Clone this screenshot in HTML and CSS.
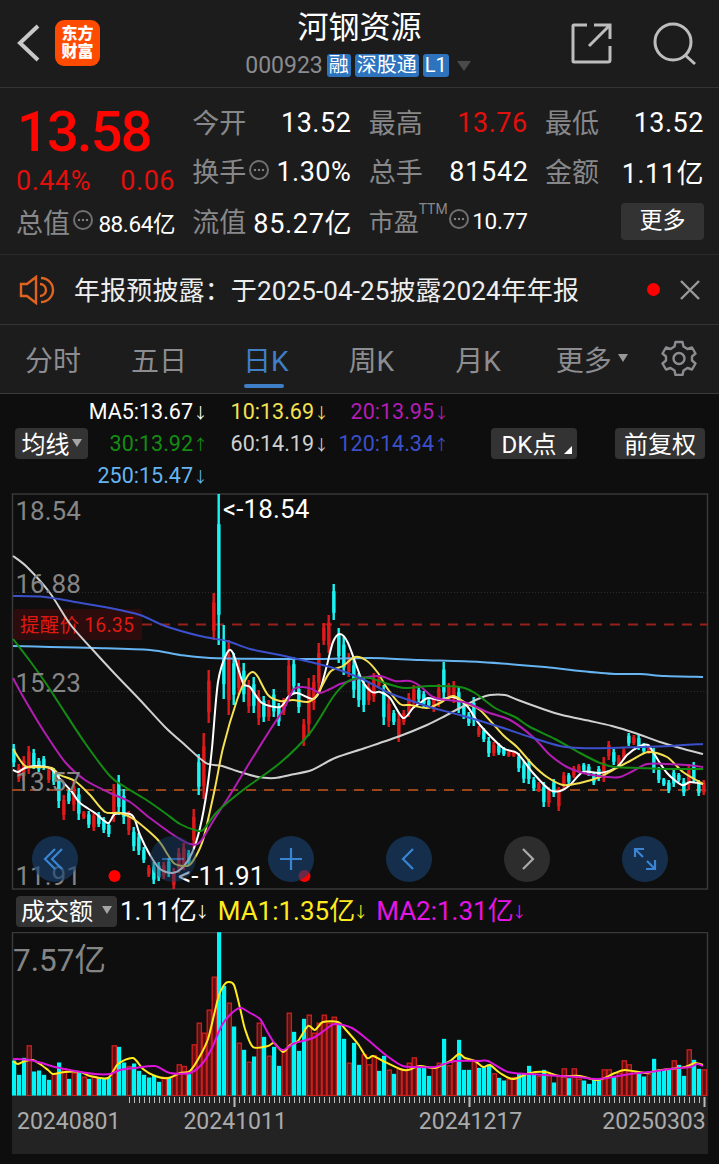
FILE: index.html
```html
<!DOCTYPE html>
<html lang="zh-CN">
<head>
  <meta charset="UTF-8">
  <meta name="viewport" content="width=device-width, initial-scale=1.0">
  <title>河钢资源 000923</title>
  <link rel="stylesheet" href="styles.css">
</head>
<body>

  <header class="topbar">
    <div class="topbar-left">
      <svg class="back" width="24" height="38" viewBox="0 0 24 38"><path d="M21 2 L3 19 L21 36"/></svg>
      <div class="logo"><span>东方</span><span>财富</span></div>
    </div>
    <div class="stock">
      <h1>河钢资源</h1>
      <div class="stock-sub">
        <span class="code">000923</span>
        <span class="tag">融</span>
        <span class="tag">深股通</span>
        <span class="tag">L1</span>
        <i class="tri"></i>
      </div>
    </div>
    <div class="topbar-right">
      <svg width="42" height="42" viewBox="0 0 42 42"><path d="M16 2H3Q2 2 2 3V38Q2 39 3 39H37Q39 39 39 37V23M23 2H39V16M39 2L18 23"/></svg>
      <svg width="46" height="46" viewBox="0 0 46 46"><circle cx="21" cy="21" r="18"/><path d="M33 34L43 43"/></svg>
    </div>
  </header>

  <section class="quote">
    <div class="quote-main">
      <div class="price">13.58</div>
      <div class="change"><span>0.44%</span><span>0.06</span></div>
      <div class="cell small"><label>总值</label><i class="info"></i><b>88.64亿</b></div>
    </div>
    <div class="quote-col">
      <div class="cell"><label>今开</label><b>13.52</b></div>
      <div class="cell"><label>换手</label><i class="info"></i><b>1.30%</b></div>
      <div class="cell"><label>流值</label><b class="wide">85.27亿</b></div>
    </div>
    <div class="quote-col">
      <div class="cell"><label>最高</label><b class="up">13.76</b></div>
      <div class="cell"><label>总手</label><b class="wide">81542</b></div>
      <div class="cell small pe"><label>市盈</label><sup>TTM</sup><i class="info"></i><b>10.77</b></div>
    </div>
    <div class="quote-col">
      <div class="cell"><label>最低</label><b>13.52</b></div>
      <div class="cell"><label>金额</label><b>1.11亿</b></div>
      <div class="cell last"><button class="more">更多</button></div>
    </div>
  </section>

  <section class="notice">
    <svg class="horn" width="36" height="30" viewBox="0 0 36 30"><path d="M17 2V28L8 21H2V9H8Z"/><path d="M21 9A6 6 0 0 1 21 21M22 3A12 12 0 0 1 22 27"/></svg>
    <p>年报预披露：于2025-04-25披露2024年年报</p>
    <i class="red-dot"></i>
    <svg class="close" width="22" height="22" viewBox="0 0 22 22"><path d="M2 2L20 20M20 2L2 20"/></svg>
  </section>

  <nav class="tabs">
    <a>分时</a>
    <a class="five">五日</a>
    <a class="active">日K</a>
    <a class="week">周K</a>
    <a class="month">月K</a>
    <a class="tab-more">更多<i class="tri"></i></a>
    <svg class="gear" width="36" height="36" viewBox="0 0 36 36"><path d="M14.5 2H21.5L22.5 6.5L26.5 9L31 7.5L34.5 13.5L31 16.5V20.5L34.5 23.5L31 29.5L26.5 28L22.5 30.5L21.5 35H14.5L13.5 30.5L9.5 28L5 29.5L1.5 23.5L5 20.5V16.5L1.5 13.5L5 7.5L9.5 9L13.5 6.5Z"/><circle cx="18" cy="18.5" r="5.5"/></svg>
  </nav>

  <section class="ma-bar">
    <button class="chip ma-chip">均线<i class="tri"></i></button>
    <div class="ma-list">
      <span class="ma5">MA5:13.67<u>↓</u></span><span class="ma10">10:13.69<u>↓</u></span><span class="ma20">20:13.95<u>↓</u></span>
      <span class="ma30">30:13.92<u>↑</u></span><span class="ma60">60:14.19<u>↓</u></span><span class="ma120">120:14.34<u>↑</u></span>
      <span class="ma250">250:15.47<u>↓</u></span>
    </div>
    <button class="chip dk-chip">DK点<i class="corner"></i></button>
    <button class="chip fq-chip">前复权</button>
  </section>

  <section class="kchart">
    <svg id="kline" width="719" height="397" viewBox="0 493 719 397"></svg>
    <div class="controls">
      <button class="ctl"><svg viewBox="0 0 46 46"><path d="M30 13L20 23L30 33M23 13L13 23L23 33"/></svg></button>
      <button class="ctl faded"><svg viewBox="0 0 46 46"><path d="M12 23H34"/></svg></button>
      <button class="ctl"><svg viewBox="0 0 46 46"><path d="M12 23H34M23 12V34"/></svg></button>
      <button class="ctl"><svg viewBox="0 0 46 46"><path d="M27 13L17 23L27 33"/></svg></button>
      <button class="ctl gray"><svg viewBox="0 0 46 46"><path d="M19 13L29 23L19 33"/></svg></button>
      <button class="ctl"><svg viewBox="0 0 46 46"><path d="M13 21V13H22M13 13L21 21M33 24V33H24M33 33L25 25"/></svg></button>
    </div>
  </section>

  <section class="vol-bar">
    <button class="chip vol-chip">成交额<i class="tri"></i></button>
    <span class="v0">1.11亿<u>↓</u></span>
    <span class="v1">MA1:1.35亿<u>↓</u></span>
    <span class="v2">MA2:1.31亿<u>↓</u></span>
  </section>

  <section class="vchart">
    <svg id="volume" width="719" height="164" viewBox="0 932 719 164"></svg>
  </section>

  <footer class="axis">
    <svg id="ticks" width="696" height="11" viewBox="12 1097 696 11"></svg>
    <div class="dates"><span>20240801</span><span>20241011</span><span>20241217</span><span>20250303</span></div>
  </footer>

  <script src="script.js"></script>
</body>
</html>
```
FILE: styles.css
```css
* {
  margin: 0;
  padding: 0;
  box-sizing: border-box;
}

body {
  width: 719px;
  height: 1164px;
  overflow: hidden;
  background: #0d0e0d;
  color: #fff;
  font-family: Roboto, 'Noto Sans CJK SC', sans-serif;
}

button {
  border: none;
  color: #fff;
  font-family: inherit;
}

svg {
  display: block;
  flex: none;
}

i, u, b {
  font-style: normal;
  text-decoration: none;
  font-weight: 400;
}

.tri {
  width: 0;
  height: 0;
  border: 5px solid transparent;
  border-top: 8px solid #98989a;
  border-bottom: 0;
}

/* header */
.topbar {
  display: flex;
  justify-content: space-between;
  height: 88px;
  background: #1c1c1c;
  border-bottom: 1px solid #343430;
}

.topbar-left {
  display: flex;
  align-items: center;
  width: 180px;
  padding: 0 0 2px 17px;
}

.back {
  fill: none;
  stroke: #c8c8c8;
  stroke-width: 4;
}

.logo {
  display: flex;
  flex-direction: column;
  justify-content: center;
  width: 45px;
  height: 46px;
  margin-left: 14px;
  border-radius: 9px;
  background: #ff4b00;
  text-align: center;
  font-size: 16px;
  line-height: 18px;
  font-weight: 900;
}

.stock {
  display: flex;
  flex-direction: column;
  align-items: center;
  width: 360px;
}

.stock h1 {
  height: 52px;
  font-size: 31px;
  line-height: 56px;
  font-weight: 400;
}

.stock-sub {
  display: flex;
  align-items: center;
  gap: 4px;
  height: 27px;
  padding-right: 3px;
}

.code {
  color: #8b8b8f;
  font-size: 23px;
}

.tag {
  height: 23px;
  padding: 0 2px;
  border-radius: 3px;
  background: #2e73bd;
  font-size: 20px;
  line-height: 22px;
}

.stock-sub .tri {
  margin-left: 4px;
  border-width: 10px 7px 0;
  border-top-color: #4a4a4a;
}

.topbar-right {
  display: flex;
  align-items: center;
  justify-content: flex-end;
  gap: 39px;
  width: 180px;
  padding: 0 21px 0 0;
  fill: none;
  stroke: #bdbdbd;
  stroke-width: 3;
}

/* quote */
.quote {
  display: flex;
  justify-content: space-between;
  height: 167px;
  padding: 10px 15px 8px 16px;
  background: #1c1c1c;
  border-bottom: 1px solid #2a2a2a;
}

.quote-main, .quote-col {
  display: flex;
  flex-direction: column;
  width: 159px;
}

.price {
  height: 62px;
  padding-left: 1px;
  color: #ff0500;
  font-size: 56px;
  line-height: 68px;
  font-weight: 500;
  letter-spacing: -1.8px;
}

.change {
  display: flex;
  justify-content: space-between;
  height: 38px;
  color: #e0100c;
  font-size: 27px;
  line-height: 42px;
  letter-spacing: 0.5px;
}

.cell {
  display: flex;
  align-items: center;
  height: 49.5px;
}

.cell label {
  margin-top: -2px;
  color: #88888a;
  font-size: 27px;
  white-space: nowrap;
}

.cell b {
  margin-left: auto;
  font-size: 27px;
  letter-spacing: 0.5px;
  white-space: nowrap;
}

.cell.small b {
  font-size: 22.5px;
  letter-spacing: -0.4px;
}

.cell b.wide {
  margin-right: -1px;
  letter-spacing: 0.7px;
}

.cell b.up {
  color: #e0100c;
}

.cell sup {
  align-self: flex-start;
  color: #88888a;
  font-size: 14px;
  line-height: 14px;
  padding-top: 5px;
}

.pe label {
  width: 50px;
  font-size: 25px;
}

.info {
  flex: none;
  width: 20px;
  height: 20px;
  margin: -4px 0 0 3px;
  border: 2px solid #707072;
  border-radius: 50%;
  background: radial-gradient(circle at 4px 8px, #808080 1.3px, transparent 1.6px), radial-gradient(circle at 8px 8px, #808080 1.3px, transparent 1.6px), radial-gradient(circle at 12px 8px, #808080 1.3px, transparent 1.6px);
}

.pe .info {
  margin-left: 1px;
}

.cell.pe b {
  letter-spacing: -0.2px;
}

.last {
  justify-content: flex-end;
}

.more {
  width: 83px;
  height: 37px;
  border-radius: 4px;
  background: #333;
  font-size: 23px;
  line-height: 34px;
}

/* notice */
.notice {
  display: flex;
  align-items: center;
  height: 70px;
  padding: 0 18px 0 19px;
  background: #1c1c1c;
  border-bottom: 1px solid #343434;
}

.horn {
  fill: none;
  stroke: #e0631f;
  stroke-width: 2.4;
}

.notice p {
  flex: 1;
  margin: -3px 0 0 19px;
  font-size: 26px;
  letter-spacing: 0.13px;
  color: #eee;
  white-space: nowrap;
}

.red-dot {
  width: 13px;
  height: 13px;
  margin-right: 19px;
  border-radius: 50%;
  background: #f00;
}

.close {
  fill: none;
  stroke: #999;
  stroke-width: 2.4;
}

/* tabs */
.tabs {
  display: flex;
  align-items: center;
  height: 69px;
  padding-left: 25px;
  background: #1c1c1c;
  border-bottom: 1px solid #3a3a3a;
  color: #8d8d91;
  font-size: 28px;
}

.tabs a {
  display: flex;
  align-items: center;
  height: 68px;
  margin-right: 50px;
  white-space: nowrap;
}

.tabs .five {
  margin-right: 56px;
}

.tabs .active {
  position: relative;
  color: #3f7fc8;
  margin-right: 60px;
}

.tabs .active::after {
  content: '';
  position: absolute;
  left: 1px;
  bottom: 5px;
  width: 40px;
  height: 4px;
  border-radius: 2px;
  background: #3f7fc8;
}

.tabs .week {
  margin-right: 61px;
}

.tabs .month {
  margin-right: 55px;
}

.tabs .tab-more {
  margin-right: 33px;
}

.tab-more .tri {
  margin: -3px 0 0 6px;
}

.gear {
  margin-top: -3px;
  fill: none;
  stroke: #8d8d91;
  stroke-width: 2.4;
  stroke-linejoin: round;
}

/* moving averages */
.ma-bar {
  display: flex;
  align-items: center;
  height: 99px;
  padding-left: 15px;
}

.chip {
  display: flex;
  align-items: center;
  justify-content: center;
  height: 31px;
  padding-bottom: 2px;
  border-radius: 4px;
  background: #333;
  font-size: 24px;
}

.chip .tri {
  border-top-color: #a5a5a5;
}

.ma-chip {
  width: 73px;
}

.ma-chip .tri {
  margin-left: 2px;
}

.ma-list {
  display: grid;
  grid-template-columns: 120px 121px 120px;
  grid-auto-rows: 32px;
  height: 96px;
  width: 403px;
  text-align: right;
  font-size: 21.5px;
  line-height: 32px;
}

.ma-list span {
  display: flex;
  align-items: center;
  justify-content: flex-end;
  white-space: nowrap;
}

.ma-list u, .vol-bar u {
  width: 15px;
  font-family: 'Noto Sans CJK SC', sans-serif;
  font-size: 15px;
  line-height: 20px;
}

.ma5 { color: #fff; }
.ma10 { color: #f5e152; }
.ma20 { color: #b41db4; }
.ma30 { color: #148c14; }
.ma60 { color: #d0d0d0; }
.ma120 { color: #3c50cc; }
.ma250 { color: #66b5f2; }

.dk-chip {
  width: 86px;
  padding-right: 2px;
}

.corner {
  align-self: flex-end;
  margin: 0 -8px 3px 8px;
  border-left: 8px solid transparent;
  border-bottom: 8px solid #fff;
}

.fq-chip {
  width: 90px;
  margin-left: 38px;
}

/* charts */
.kchart {
  position: relative;
  height: 397px;
}

.controls {
  position: absolute;
  left: 32px;
  top: 343px;
  display: flex;
  gap: 72px;
}

.ctl {
  width: 46px;
  height: 46px;
  border-radius: 50%;
  background: rgba(25, 65, 110, 0.65);
}

.ctl svg {
  width: 46px;
  height: 46px;
  fill: none;
  stroke: #3a84d2;
  stroke-width: 2.2;
}

.ctl.faded {
  opacity: 0.7;
}

.ctl.gray {
  background: #2d2d2d;
}

.ctl.gray svg {
  stroke: #aaa;
}

#kline, #volume {
  font-family: Roboto, 'Noto Sans CJK SC', sans-serif;
}

#kline {
  overflow: visible;
}

.frame { fill: none; stroke: #393939; stroke-width: 1.5; }
.grid { stroke: #2b2b2b; stroke-dasharray: 1 2; }
.label { fill: #858587; font-size: 26px; }
.mark { fill: #fff; font-size: 26px; letter-spacing: 0.1px; }
.line { fill: none; stroke-width: 2; }

.vol-bar {
  display: flex;
  align-items: center;
  height: 42px;
  padding-left: 16px;
  font-size: 26px;
  line-height: 30px;
  white-space: nowrap;
}

.vol-bar span {
  display: flex;
  align-items: center;
  height: 30px;
}

.vol-chip {
  width: 101px;
  padding-bottom: 3px;
}

.vol-chip .tri {
  margin-left: 9px;
}

.vol-bar u {
  margin-left: -2px;
}

.v0 { margin-left: 3px; }
.v1 { margin-left: 8px; color: #ffeb1e; }
.v2 { margin-left: 8px; color: #e614e6; }

.axis {
  width: 696px;
  height: 58px;
  margin-left: 12px;
  background: #232324;
}

.dates {
  display: flex;
  padding-left: 5px;
  color: #ababab;
  font-size: 23px;
  line-height: 30px;
}

.dates span:nth-child(2) { margin-left: 63px; }
.dates span:nth-child(3) { margin-left: 132px; }
.dates span:nth-child(4) { margin-left: 80px; }
```
FILE: script.js
```js
const NS = 'http://www.w3.org/2000/svg';
const UP = '#e0191b';
const DOWN = '#1cf4f4';

function add(parent, tag, attrs, text) {
  const el = document.createElementNS(NS, tag);
  for (const k in attrs) el.setAttribute(k, attrs[k]);
  if (text) el.textContent = text;
  parent.appendChild(el);
  return el;
}

// d/u = falling/rising day, then high and low
const days = `d744,767 u764,782 u756,781 u746,774 d749,769 d758,772 d756,770 u767,783 d768,785 d773,808
u795,820 d790,804 u780,811 d788,820 u811,819 d811,828 u812,831 d812,827 d817,833 d822,837
u784,822 d775,815 d789,824 u811,835 d827,851 d833,855 d847,863 u865,877 d862,884 d862,881
u862,879 d858,877 u868,889 u848,873 u843,870 d850,865 u809,848 d754,795 u733,799 u670,723
u593,640 d494,645 d625,699 u640,715 d653,705 u660,695 d663,702 u680,713 d677,713 u690,725
d696,722 u700,721 d689,717 d703,726 u698,715 u657,700 d657,693 d683,713 u719,746 u678,736
u675,710 u643,693 u623,645 u615,653 d584,620 d628,663 d637,675 u653,677 d657,698 d673,707
d677,712 u683,705 u673,702 u677,688 d685,725 u698,727 d710,725 u713,742 u710,725 u693,717
u685,707 d687,702 d691,707 d699,707 u696,712 u684,707 d662,700 u683,700 u681,703 d687,713
d703,719 d712,726 d697,726 u726,737 d728,742 d737,757 u742,756 d743,755 d747,756 u750,757
u751,757 d753,772 d761,783 d759,784 d777,791 u782,792 d782,807 u787,807 d779,797 u787,811
u772,789 d773,784 u766,778 u764,773 d763,772 d764,776 d772,785 d766,781 u757,782 u741,760
d749,765 u755,768 u748,760 d733,746 u735,745 d735,750 d743,753 u744,754 d748,773 d767,783
d778,786 d780,793 d769,787 d773,782 d778,796 u764,790 d762,783 d780,796 u780,795`.split(/\s+/);

// bar heights in thirds of a pixel
const vols = `105d 62d 113d 149u 72d 75d 62d 47d 65u 99d 80u 50d 67u 72d 55u 50d 57u 54d 52d 54d
149u 146d 99d 87u 96d 74d 62d 54d 62d 41d 54u 54d 57u 92u 87u 64d 152u 217u 187u 256u
355u 490d 329d 277u 207d 157u 137d 100u 117d 217u 176d 118u 146d 89d 137u 247u 191d 134d 230d 241u
187u 217u 241u 217u 235u 215d 170d 97u 158d 92d 122u 92u 119u 74d 119d 76u 65d 80u 77u 97u
113u 90d 86d 59d 85u 97u 170d 89u 104u 167d 77d 77d 102u 83d 87d 92d 65u 53d 45d 49u
54u 65d 65d 89d 65d 57u 77d 61u 39d 57u 80u 52d 80u 49u 45d 35d 47d 47d 77u 77u
57d 67u 104u 92u 72u 67d 57d 64u 110d 77d 77d 77d 104u 92d 59d 137u 107d 80d 77u`.split(/\s+/);

const averages = [
  ['#66b5f2', '13,646 50,647 95,648 150,650 180,655 210,658 270,659 320,659 370,658 420,660 480,662 545,667 580,671 615,674 640,674 665,676 703,677'],
  ['#d0d0d0', '13,556 27,567 50,593 70,624 92,649 115,674 140,700 165,727 185,745 206,763 222,766 240,772 258,777 275,778 290,775 312,770 335,758 365,748 400,736 427,725 445,716 460,708 478,699 490,695 505,695 518,700 540,708 562,715 590,721 612,726 635,733 660,742 680,748 703,754'],
  ['#fff', '13,770 18,772 25,768 35,766 50,768 60,779 72,792 80,803 95,813 108,823 115,814 130,814 135,820 140,835 150,855 160,869 172,873 182,868 192,853 200,828 207,790 212,748 218,682 227,653 233,653 243,683 250,687 262,703 280,707 288,697 297,693 313,699 320,690 327,665 333,642 340,634 348,643 362,680 372,692 380,692 390,698 403,718 413,708 420,703 428,698 440,700 453,697 467,706 480,725 503,748 517,753 533,773 550,790 560,791 570,785 583,772 600,773 617,767 627,755 640,746 648,745 653,752 667,773 682,785 690,782 703,784'],
  ['#f5e152', '13,749 25,766 40,767 52,768 60,775 75,781 90,795 105,812 120,813 135,820 158,840 168,855 175,864 187,866 193,861 203,840 215,788 223,748 237,700 247,677 253,672 258,677 268,695 280,701 293,700 308,702 317,695 330,672 343,666 355,657 367,661 378,673 387,688 400,704 410,705 427,708 440,703 453,696 467,704 480,710 503,735 517,747 533,765 547,777 563,785 580,783 600,777 613,770 630,761 648,752 667,757 683,772 703,784'],
  ['#b41db4', '13,678 25,700 45,733 65,762 85,780 110,793 130,802 150,818 175,836 190,844 200,842 215,818 230,795 250,762 270,730 285,707 293,690 302,687 312,689 320,693 330,689 340,684 350,681 360,678 380,676 395,681 410,681 420,686 433,697 447,700 467,703 487,712 510,720 533,737 550,755 567,767 583,773 607,777 620,777 633,771 647,764 667,764 687,765 703,767'],
  ['#148c14', '13,639 30,661 45,682 60,705 85,743 110,776 125,787 145,799 165,813 180,824 195,830 203,830 217,812 243,790 280,763 310,733 333,697 347,682 358,678 370,678 385,683 405,688 430,686 460,687 475,693 495,708 515,717 530,727 555,739 580,753 600,763 615,767 640,768 665,769 703,769'],
  ['#3c50cc', '13,596 45,597 75,602 110,608 140,615 165,626 200,636 227,641 250,649 280,655 330,667 360,678 387,692 400,697 433,708 460,715 500,727 533,738 560,746 580,748 610,748 640,747 670,746 703,744']
];

const volAverages = [
  ['#ffeb1e', '13,1061 18,1064 25,1061 33,1060 40,1064 48,1070 53,1074 65,1072 80,1072 90,1076 108,1078 118,1064 133,1058 143,1069 155,1076 168,1078 180,1073 190,1071 200,1056 208,1039 214,1015 219,995 224,985 228,982 234,985 240,1008 245,1029 253,1047 268,1046 274,1043 283,1052 290,1045 298,1041 308,1026 315,1030 323,1022 338,1022 346,1030 358,1044 367,1058 373,1056 383,1061 400,1069 408,1070 420,1066 435,1068 450,1061 459,1054 465,1058 475,1061 483,1067 490,1065 500,1073 513,1079 530,1073 545,1072 560,1076 580,1076 598,1080 615,1073 625,1070 645,1073 655,1071 670,1069 685,1067 695,1063 703,1065'],
  ['#dc14dc', '13,1059 30,1060 45,1064 55,1067 75,1071 95,1074 110,1074 120,1070 135,1068 155,1066 170,1073 190,1073 202,1064 212,1048 222,1025 233,1012 241,1008 250,1013 260,1019 268,1033 275,1044 283,1050 295,1043 313,1038 325,1030 335,1024 352,1028 368,1040 387,1056 403,1066 420,1067 435,1067 455,1061 480,1061 488,1061 508,1072 530,1074 560,1076 578,1077 598,1079 630,1074 650,1072 670,1069 690,1067 697,1064 703,1066']
];

// curve through all points
function curve(str) {
  const p = str.split(' ').map(s => s.split(',').map(Number));
  let d = 'M' + p[0];
  for (let i = 0; i < p.length - 1; i++) {
    const a = p[i - 1] || p[i], b = p[i], c = p[i + 1], e = p[i + 2] || c;
    d += `C${b[0] + (c[0] - a[0]) / 7},${b[1] + (c[1] - a[1]) / 7} ${c[0] - (e[0] - b[0]) / 7},${c[1] - (e[1] - b[1]) / 7} ${c}`;
  }
  return d;
}

const k = document.getElementById('kline');
add(k, 'rect', { x: 12.5, y: 494, width: 695, height: 395, class: 'frame' });
[592.5, 691.5, 790.5].forEach(y => add(k, 'line', { x1: 13, x2: 707, y1: y, y2: y, class: 'grid' }));
add(k, 'rect', { x: 13, y: 609, width: 129, height: 31, rx: 2, fill: '#2c0c0c' });
add(k, 'text', { x: 20, y: 632, fill: '#dc1a14', 'font-size': 19.5, 'letter-spacing': 0.2 }, '提醒价 16.35');
add(k, 'path', { d: 'M142 624.5H708', stroke: '#98201c', 'stroke-width': 2, 'stroke-dasharray': '10 8' });
add(k, 'path', { d: 'M12 790H708', stroke: '#9c441a', 'stroke-width': 2, 'stroke-dasharray': '10 8' });

days.forEach((s, i) => {
  const [hi, lo] = s.slice(1).split(',').map(Number);
  const color = s[0] === 'u' ? UP : DOWN;
  const x = 13.5 + i * 5;
  const pad = (lo - hi) * 0.2;
  add(k, 'rect', { x: x - 1, y: hi, width: 2.4, height: lo - hi, fill: color });
  add(k, 'rect', { x: x - 1.3, y: hi + pad, width: 3.4, height: lo - hi - 2 * pad, fill: color });
});
averages.forEach(([color, pts]) => add(k, 'path', { d: curve(pts), stroke: color, class: 'line' }));

[['18.54', 520], ['16.88', 593], ['15.23', 692], ['13.57', 791], ['11.91', 885]].forEach(([t, y]) => add(k, 'text', { x: 15.5, y: y, class: 'label' }, t));
add(k, 'text', { x: 223, y: 518, class: 'mark' }, '<-18.54');
add(k, 'text', { x: 178, y: 885, class: 'mark' }, '<-11.91');
add(k, 'circle', { cx: 114.5, cy: 876, r: 6, fill: '#f00' });
add(k, 'circle', { cx: 304.5, cy: 876, r: 6, fill: '#f00' });

const v = document.getElementById('volume');
add(v, 'rect', { x: 12.5, y: 932.5, width: 695, height: 163, class: 'frame' });
add(v, 'text', { x: 13, y: 971, class: 'label', style: 'font-size:31.5px' }, '7.57亿');
vols.forEach((s, i) => {
  const h = parseInt(s) / 3;
  const x = 14 + i * 5;
  if (s.endsWith('u')) {
    add(v, 'rect', { x: x - 1.8, y: 1095.5 - h, width: 4.2, height: h, fill: '#5a1010', stroke: '#cc2020', 'stroke-width': 1.3 });
  } else {
    add(v, 'rect', { x: x - 2, y: 1095.5 - h, width: 4.2, height: h, fill: '#00f6f6' });
  }
});
volAverages.forEach(([color, pts]) => add(v, 'path', { d: curve(pts), stroke: color, class: 'line' }));

const t = document.getElementById('ticks');
for (let x = 129.5; x < 706; x += 5) {
  const big = [234.5, 469.5, 704.5].includes(x);
  add(t, 'line', { x1: x, x2: x, y1: 1098, y2: big ? 1108 : 1104, stroke: '#bbb', 'stroke-width': big ? 2 : 1 });
}
```
